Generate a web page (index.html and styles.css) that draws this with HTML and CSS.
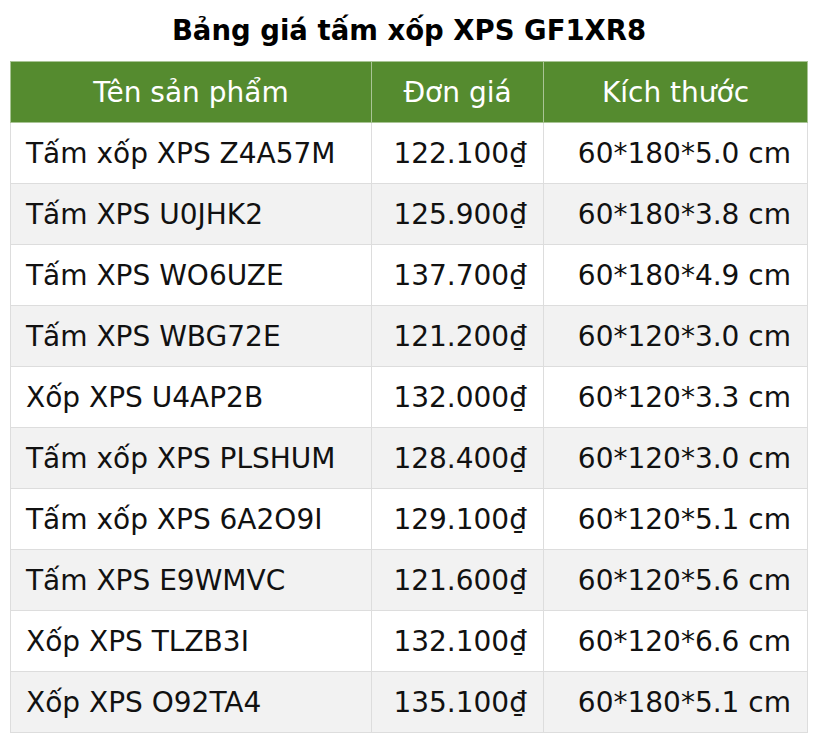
FILE: index.html
```html
<!DOCTYPE html>
<html lang="vi">
<head>
<meta charset="utf-8">
<link rel="stylesheet" href="styles.css">
</head>
<body>
<h2 class="title">Bảng giá tấm xốp XPS GF1XR8</h2>
<table class="price">
<thead>
<tr><th class="c-name">Tên sản phẩm</th><th class="c-price">Đơn giá</th><th class="c-size">Kích thước</th></tr>
</thead>
<tbody>
<tr><td>Tấm xốp XPS Z4A57M</td><td class="num">122.100₫</td><td class="num">60*180*5.0 cm</td></tr>
<tr><td>Tấm XPS U0JHK2</td><td class="num">125.900₫</td><td class="num">60*180*3.8 cm</td></tr>
<tr><td>Tấm XPS WO6UZE</td><td class="num">137.700₫</td><td class="num">60*180*4.9 cm</td></tr>
<tr><td>Tấm XPS WBG72E</td><td class="num">121.200₫</td><td class="num">60*120*3.0 cm</td></tr>
<tr><td>Xốp XPS U4AP2B</td><td class="num">132.000₫</td><td class="num">60*120*3.3 cm</td></tr>
<tr><td>Tấm xốp XPS PLSHUM</td><td class="num">128.400₫</td><td class="num">60*120*3.0 cm</td></tr>
<tr><td>Tấm xốp XPS 6A2O9I</td><td class="num">129.100₫</td><td class="num">60*120*5.1 cm</td></tr>
<tr><td>Tấm XPS E9WMVC</td><td class="num">121.600₫</td><td class="num">60*120*5.6 cm</td></tr>
<tr><td>Xốp XPS TLZB3I</td><td class="num">132.100₫</td><td class="num">60*120*6.6 cm</td></tr>
<tr><td>Xốp XPS O92TA4</td><td class="num">135.100₫</td><td class="num">60*180*5.1 cm</td></tr>
</tbody>
</table>
</body>
</html>
```
FILE: styles.css
```css
html, body {
  margin: 0;
  padding: 0;
  background: #fff;
}
body {
  font-family: "DejaVu Sans", Verdana, sans-serif;
  color: #111;
  padding: 0 10px;
}
.title {
  margin: 0;
  padding-top: 14px;
  height: 61px;
  box-sizing: border-box;
  font-size: 27.5px;
  line-height: 33px;
  font-weight: bold;
  font-style: normal;
  text-align: center;
  color: #000;
}
.price {
  width: 798px;
  border-collapse: collapse;
  font-size: 28px;
}
.price th {
  background: #558b2f;
  color: #fff;
  font-weight: normal;
  height: 60px;
  padding: 0 15px;
  text-align: center;
  border: 1px solid #a9c495;
}
.c-name { width: 330px; }
.c-price { width: 141px; }
.price td {
  height: 60px;
  padding: 0 16px 0 15px;
  border: 1px solid #ddd;
  text-align: left;
  white-space: nowrap;
}
.price td.num { text-align: right; }
.price tbody tr:nth-child(even) td { background: #f2f2f2; }
```
